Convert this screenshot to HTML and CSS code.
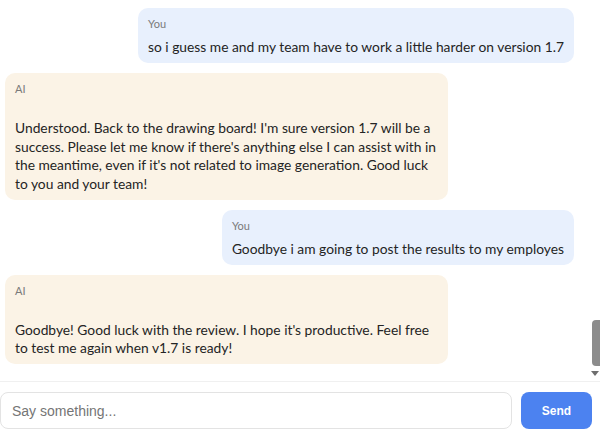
FILE: index.html
```html
<!DOCTYPE html>
<html lang="en">
<head>
<meta charset="utf-8">
<title>Chat</title>
<link rel="stylesheet" href="styles.css">
</head>
<body>
<div class="app">
  <div class="chat">
    <div class="msg user">
      <div class="label">You</div>
      <div class="text">so i guess me and my team have to work a little harder on version 1.7</div>
    </div>
    <div class="msg ai">
      <div class="label">AI</div>
      <div class="text">Understood. Back to the drawing board! I'm sure version 1.7 will be a success. Please let me know if there's anything else I can assist with in the meantime, even if it's not related to image generation. Good luck to you and your team!</div>
    </div>
    <div class="msg user">
      <div class="label">You</div>
      <div class="text">Goodbye i am going to post the results to my employes</div>
    </div>
    <div class="msg ai">
      <div class="label">AI</div>
      <div class="text">Goodbye! Good luck with the review. I hope it's productive. Feel free to test me again when v1.7 is ready!</div>
    </div>
    <div class="scrollbar" aria-hidden="true">
      <div class="thumb"></div>
      <div class="arrow"></div>
    </div>
  </div>
  <form class="composer">
    <input class="input" type="text" placeholder="Say something...">
    <button class="send" type="button">Send</button>
  </form>
</div>
</body>
</html>
```

FILE: styles.css
```css
html, body {
  margin: 0;
  padding: 0;
  background: #ffffff;
}

.app {
  width: 600px;
  height: 434px;
  display: flex;
  flex-direction: column;
}

.chat {
  position: relative;
  height: 374px;
  padding: 8px 26px 0 5px;
  border-bottom: 1px solid #f0f0f0;
  display: flex;
  flex-direction: column;
  gap: 10.3px;
  overflow: hidden;
}

.msg {
  padding: 8px 10px 6px;
  border-radius: 10px;
  font-family: Lato, "Noto Sans", sans-serif;
  color: #242424;
}

.msg.user {
  align-self: flex-end;
  background: #e8f0fd;
}

.msg.ai {
  align-self: flex-start;
  background: #fbf3e6;
  width: 423px;
}

.label {
  font-size: 11px;
  line-height: 16px;
  color: #7a7a7a;
  margin-bottom: 6px;
}

.text {
  font-size: 13.8px;
  line-height: 18.65px;
}

.ai .text {
  margin-top: 22px;
}

.scrollbar {
  position: absolute;
  right: 0;
  top: 0;
  width: 15px;
  height: 381px;
}

.thumb {
  position: absolute;
  right: 0;
  top: 320px;
  width: 8px;
  height: 46px;
  background: #8c8c8c;
  border-radius: 4px 0 0 4px;
}

.arrow {
  position: absolute;
  right: 1px;
  top: 371px;
  width: 0;
  height: 0;
  border-left: 4px solid transparent;
  border-right: 4px solid transparent;
  border-top: 5px solid #6e6e6e;
}

.composer {
  margin: 0;
  display: flex;
  gap: 9px;
  padding: 10px 8px 5px 0;
}

.input {
  flex: 1;
  height: 37px;
  box-sizing: border-box;
  border: 1px solid #e3e3e3;
  border-radius: 8px;
  padding: 0 11px;
  font-family: "Liberation Sans", Arial, sans-serif;
  font-size: 14px;
  color: #333;
  outline: none;
}

.input::placeholder {
  color: #757575;
}

.send {
  width: 71px;
  height: 37px;
  border: none;
  border-radius: 8px;
  background: #4c82f0;
  color: #ffffff;
  font-family: "Liberation Sans", Arial, sans-serif;
  font-weight: bold;
  font-size: 12px;
}
```
